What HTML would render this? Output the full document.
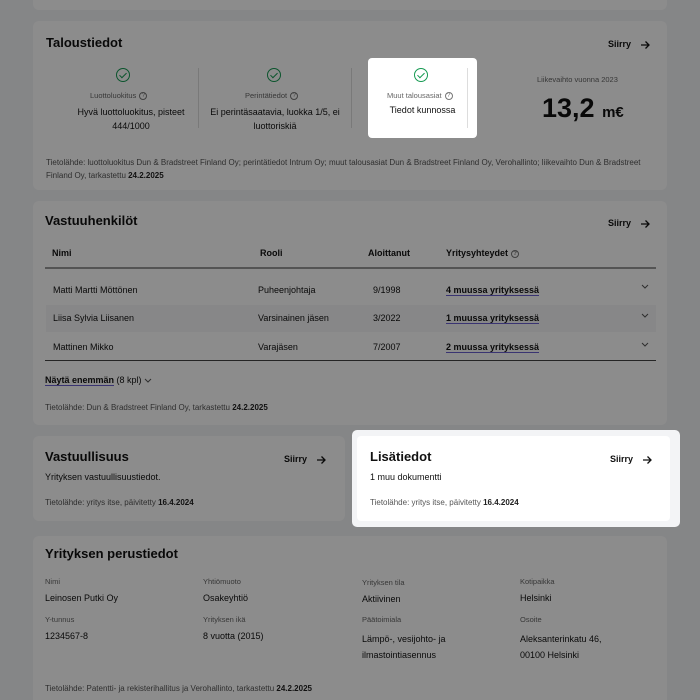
<!DOCTYPE html>
<html><head><meta charset="utf-8"><style>
*{margin:0;padding:0;box-sizing:border-box}
html,body{width:700px;height:700px;overflow:hidden;background:#f3f4f6}
body{font-family:"Liberation Sans",sans-serif;color:#111;position:relative}
.card{position:absolute;background:#fff;border-radius:6px}
.a{position:absolute;white-space:nowrap}
.t{font-size:13px;font-weight:bold}
.s{font-size:8px;color:#555}
.sm{font-size:9px}
.lab{font-size:7.5px;color:#666}
.u{border-bottom:1px solid #6a5fd0}
.ck{position:absolute;width:14px;height:14px;border:1.6px solid #159a52;border-radius:50%}
.ck:after{content:"";position:absolute;left:3.5px;top:1.5px;width:3px;height:6px;border:solid #159a52;border-width:0 1.6px 1.6px 0;transform:rotate(45deg)}
.q{display:inline-block;width:8px;height:8px;border:1px solid #777;border-radius:50%;font-size:6px;text-align:center;line-height:6px;vertical-align:middle;margin-left:3px;color:#777}
.vl{position:absolute;width:1px;background:#ddd}
.sr{position:absolute;font-size:9px;font-weight:bold;white-space:nowrap}
.sr svg{vertical-align:middle;margin-left:9px}
.ov{position:absolute;left:0;top:0;width:700px;height:700px;background:rgba(0,0,0,0.45);z-index:5;pointer-events:none}
.hi{z-index:10}
</style></head><body>
<div class="card" style="left:33px;top:-10px;width:634px;height:20px"></div>

<div class="card" style="left:33px;top:21px;width:634px;height:169px"></div>
<div class="a t" style="left:46px;top:35px">Taloustiedot</div>
<div class="sr" style="left:608px;top:39px">Siirry<svg width="10" height="10" viewBox="0 0 10 10"><path d="M1 5H9M5.5 1.5L9 5L5.5 8.5" stroke="#111" stroke-width="1.3" fill="none"/></svg></div>
<div class="ck" style="left:116px;top:68px"></div>
<div class="ck" style="left:267px;top:68px"></div>
<div class="vl" style="left:198px;top:68px;height:60px"></div>
<div class="vl" style="left:351px;top:68px;height:60px"></div>
<div class="a lab" style="left:90px;top:91px">Luottoluokitus<span class="q">?</span></div>
<div class="a lab" style="left:245px;top:91px">Perintätiedot<span class="q">?</span></div>
<div class="a sm" style="left:66px;top:105px;width:130px;text-align:center;white-space:normal;line-height:14px">Hyvä luottoluokitus, pisteet 444/1000</div>
<div class="a sm" style="left:209px;top:105px;width:132px;text-align:center;white-space:normal;line-height:14px">Ei perintäsaatavia, luokka 1/5, ei luottoriskiä</div>
<div class="a lab" style="left:537px;top:75px">Liikevaihto vuonna 2023</div>
<div class="a" style="left:542px;top:93px;font-size:27px;font-weight:bold">13,2 <span style="font-size:15px">m€</span></div>
<div class="a s" style="left:46px;top:156px;line-height:13px;width:620px;white-space:normal">Tietolähde: luottoluokitus Dun &amp; Bradstreet Finland Oy; perintätiedot Intrum Oy; muut talousasiat Dun &amp; Bradstreet Finland Oy, Verohallinto; liikevaihto Dun &amp; Bradstreet Finland Oy, tarkastettu <b style="color:#222">24.2.2025</b></div>

<div class="card" style="left:33px;top:201px;width:634px;height:224px"></div>
<div class="a t" style="left:45px;top:213px">Vastuuhenkilöt</div>
<div class="sr" style="left:608px;top:218px">Siirry<svg width="10" height="10" viewBox="0 0 10 10"><path d="M1 5H9M5.5 1.5L9 5L5.5 8.5" stroke="#111" stroke-width="1.3" fill="none"/></svg></div>
<div class="a sm" style="left:52px;top:248px;font-weight:bold">Nimi</div>
<div class="a sm" style="left:260px;top:248px;font-weight:bold">Rooli</div>
<div class="a sm" style="left:368px;top:248px;font-weight:bold">Aloittanut</div>
<div class="a sm" style="left:446px;top:248px;font-weight:bold">Yritysyhteydet<span class="q">?</span></div>
<div style="position:absolute;left:45px;top:267px;width:611px;height:2px;background:#999"></div>
<div style="position:absolute;left:46px;top:305px;width:610px;height:27px;background:#f6f6f7"></div>
<div class="a sm" style="left:53px;top:285px">Matti Martti Möttönen</div>
<div class="a sm" style="left:258px;top:285px">Puheenjohtaja</div>
<div class="a sm" style="left:373px;top:285px">9/1998</div>
<div class="a sm u" style="left:446px;top:285px;font-weight:bold">4 muussa yrityksessä</div>
<div class="a sm" style="left:53px;top:313px">Liisa Sylvia Liisanen</div>
<div class="a sm" style="left:258px;top:313px">Varsinainen jäsen</div>
<div class="a sm" style="left:373px;top:313px">3/2022</div>
<div class="a sm u" style="left:446px;top:313px;font-weight:bold">1 muussa yrityksessä</div>
<div class="a sm" style="left:53px;top:342px">Mattinen Mikko</div>
<div class="a sm" style="left:258px;top:342px">Varajäsen</div>
<div class="a sm" style="left:373px;top:342px">7/2007</div>
<div class="a sm u" style="left:446px;top:342px;font-weight:bold">2 muussa yrityksessä</div>
<svg class="a" style="left:641px;top:284px" width="8" height="5"><path d="M1 1L4 4L7 1" stroke="#555" fill="none"/></svg>
<svg class="a" style="left:641px;top:313px" width="8" height="5"><path d="M1 1L4 4L7 1" stroke="#555" fill="none"/></svg>
<svg class="a" style="left:641px;top:342px" width="8" height="5"><path d="M1 1L4 4L7 1" stroke="#555" fill="none"/></svg>
<div style="position:absolute;left:45px;top:360px;width:611px;height:1px;background:#444"></div>
<div class="a sm" style="left:45px;top:375px"><span class="u" style="font-weight:bold">Näytä enemmän</span> (8 kpl) <svg width="8" height="5"><path d="M1 1L4 4L7 1" stroke="#555" fill="none"/></svg></div>
<div class="a s" style="left:45px;top:403px">Tietolähde: Dun &amp; Bradstreet Finland Oy, tarkastettu <b style="color:#222">24.2.2025</b></div>

<div class="card" style="left:33px;top:436px;width:312px;height:85px"></div>
<div class="a t" style="left:45px;top:449px">Vastuullisuus</div>
<div class="sr" style="left:284px;top:454px">Siirry<svg width="10" height="10" viewBox="0 0 10 10"><path d="M1 5H9M5.5 1.5L9 5L5.5 8.5" stroke="#111" stroke-width="1.3" fill="none"/></svg></div>
<div class="a sm" style="left:45px;top:472px">Yrityksen vastuullisuustiedot.</div>
<div class="a s" style="left:45px;top:498px">Tietolähde: yritys itse, päivitetty <b style="color:#222">16.4.2024</b></div>

<div class="card" style="left:33px;top:536px;width:634px;height:180px"></div>
<div class="a t" style="left:45px;top:546px">Yrityksen perustiedot</div>
<div class="a lab" style="left:45px;top:577px">Nimi</div>
<div class="a lab" style="left:203px;top:577px">Yhtiömuoto</div>
<div class="a lab" style="left:362px;top:578px">Yrityksen tila</div>
<div class="a lab" style="left:520px;top:577px">Kotipaikka</div>
<div class="a sm" style="left:45px;top:593px">Leinosen Putki Oy</div>
<div class="a sm" style="left:203px;top:593px">Osakeyhtiö</div>
<div class="a sm" style="left:362px;top:594px">Aktiivinen</div>
<div class="a sm" style="left:520px;top:593px">Helsinki</div>
<div class="a lab" style="left:45px;top:615px">Y-tunnus</div>
<div class="a lab" style="left:203px;top:615px">Yrityksen ikä</div>
<div class="a lab" style="left:362px;top:615px">Päätoimiala</div>
<div class="a lab" style="left:520px;top:615px">Osoite</div>
<div class="a sm" style="left:45px;top:631px">1234567-8</div>
<div class="a sm" style="left:203px;top:631px">8 vuotta (2015)</div>
<div class="a sm" style="left:362px;top:631px;line-height:16px">Lämpö-, vesijohto- ja<br>ilmastointiasennus</div>
<div class="a sm" style="left:520px;top:631px;line-height:16px">Aleksanterinkatu 46,<br>00100 Helsinki</div>
<div class="a s" style="left:45px;top:684px">Tietolähde: Patentti- ja rekisterihallitus ja Verohallinto, tarkastettu <b style="color:#222">24.2.2025</b></div>

<div class="ov"></div>

<div class="hi" style="position:absolute;left:368px;top:58px;width:109px;height:80px;background:#fff;border-radius:4px"></div>
<div class="ck hi" style="left:414px;top:68px"></div>
<div class="vl hi" style="left:467px;top:68px;height:60px"></div>
<div class="a lab hi" style="left:387px;top:91px">Muut talousasiat<span class="q">?</span></div>
<div class="a sm hi" style="left:370px;top:105px;width:105px;text-align:center">Tiedot kunnossa</div>

<div class="hi" style="position:absolute;left:352px;top:430px;width:328px;height:97px;background:#f3f4f6;border-radius:5px"></div>
<div class="hi" style="position:absolute;left:357px;top:436px;width:313px;height:85px;background:#fff;border-radius:4px"></div>
<div class="a t hi" style="left:370px;top:449px">Lisätiedot</div>
<div class="sr hi" style="left:610px;top:454px">Siirry<svg width="10" height="10" viewBox="0 0 10 10"><path d="M1 5H9M5.5 1.5L9 5L5.5 8.5" stroke="#111" stroke-width="1.3" fill="none"/></svg></div>
<div class="a sm hi" style="left:370px;top:472px">1 muu dokumentti</div>
<div class="a s hi" style="left:370px;top:498px">Tietolähde: yritys itse, päivitetty <b style="color:#222">16.4.2024</b></div>
</body></html>
